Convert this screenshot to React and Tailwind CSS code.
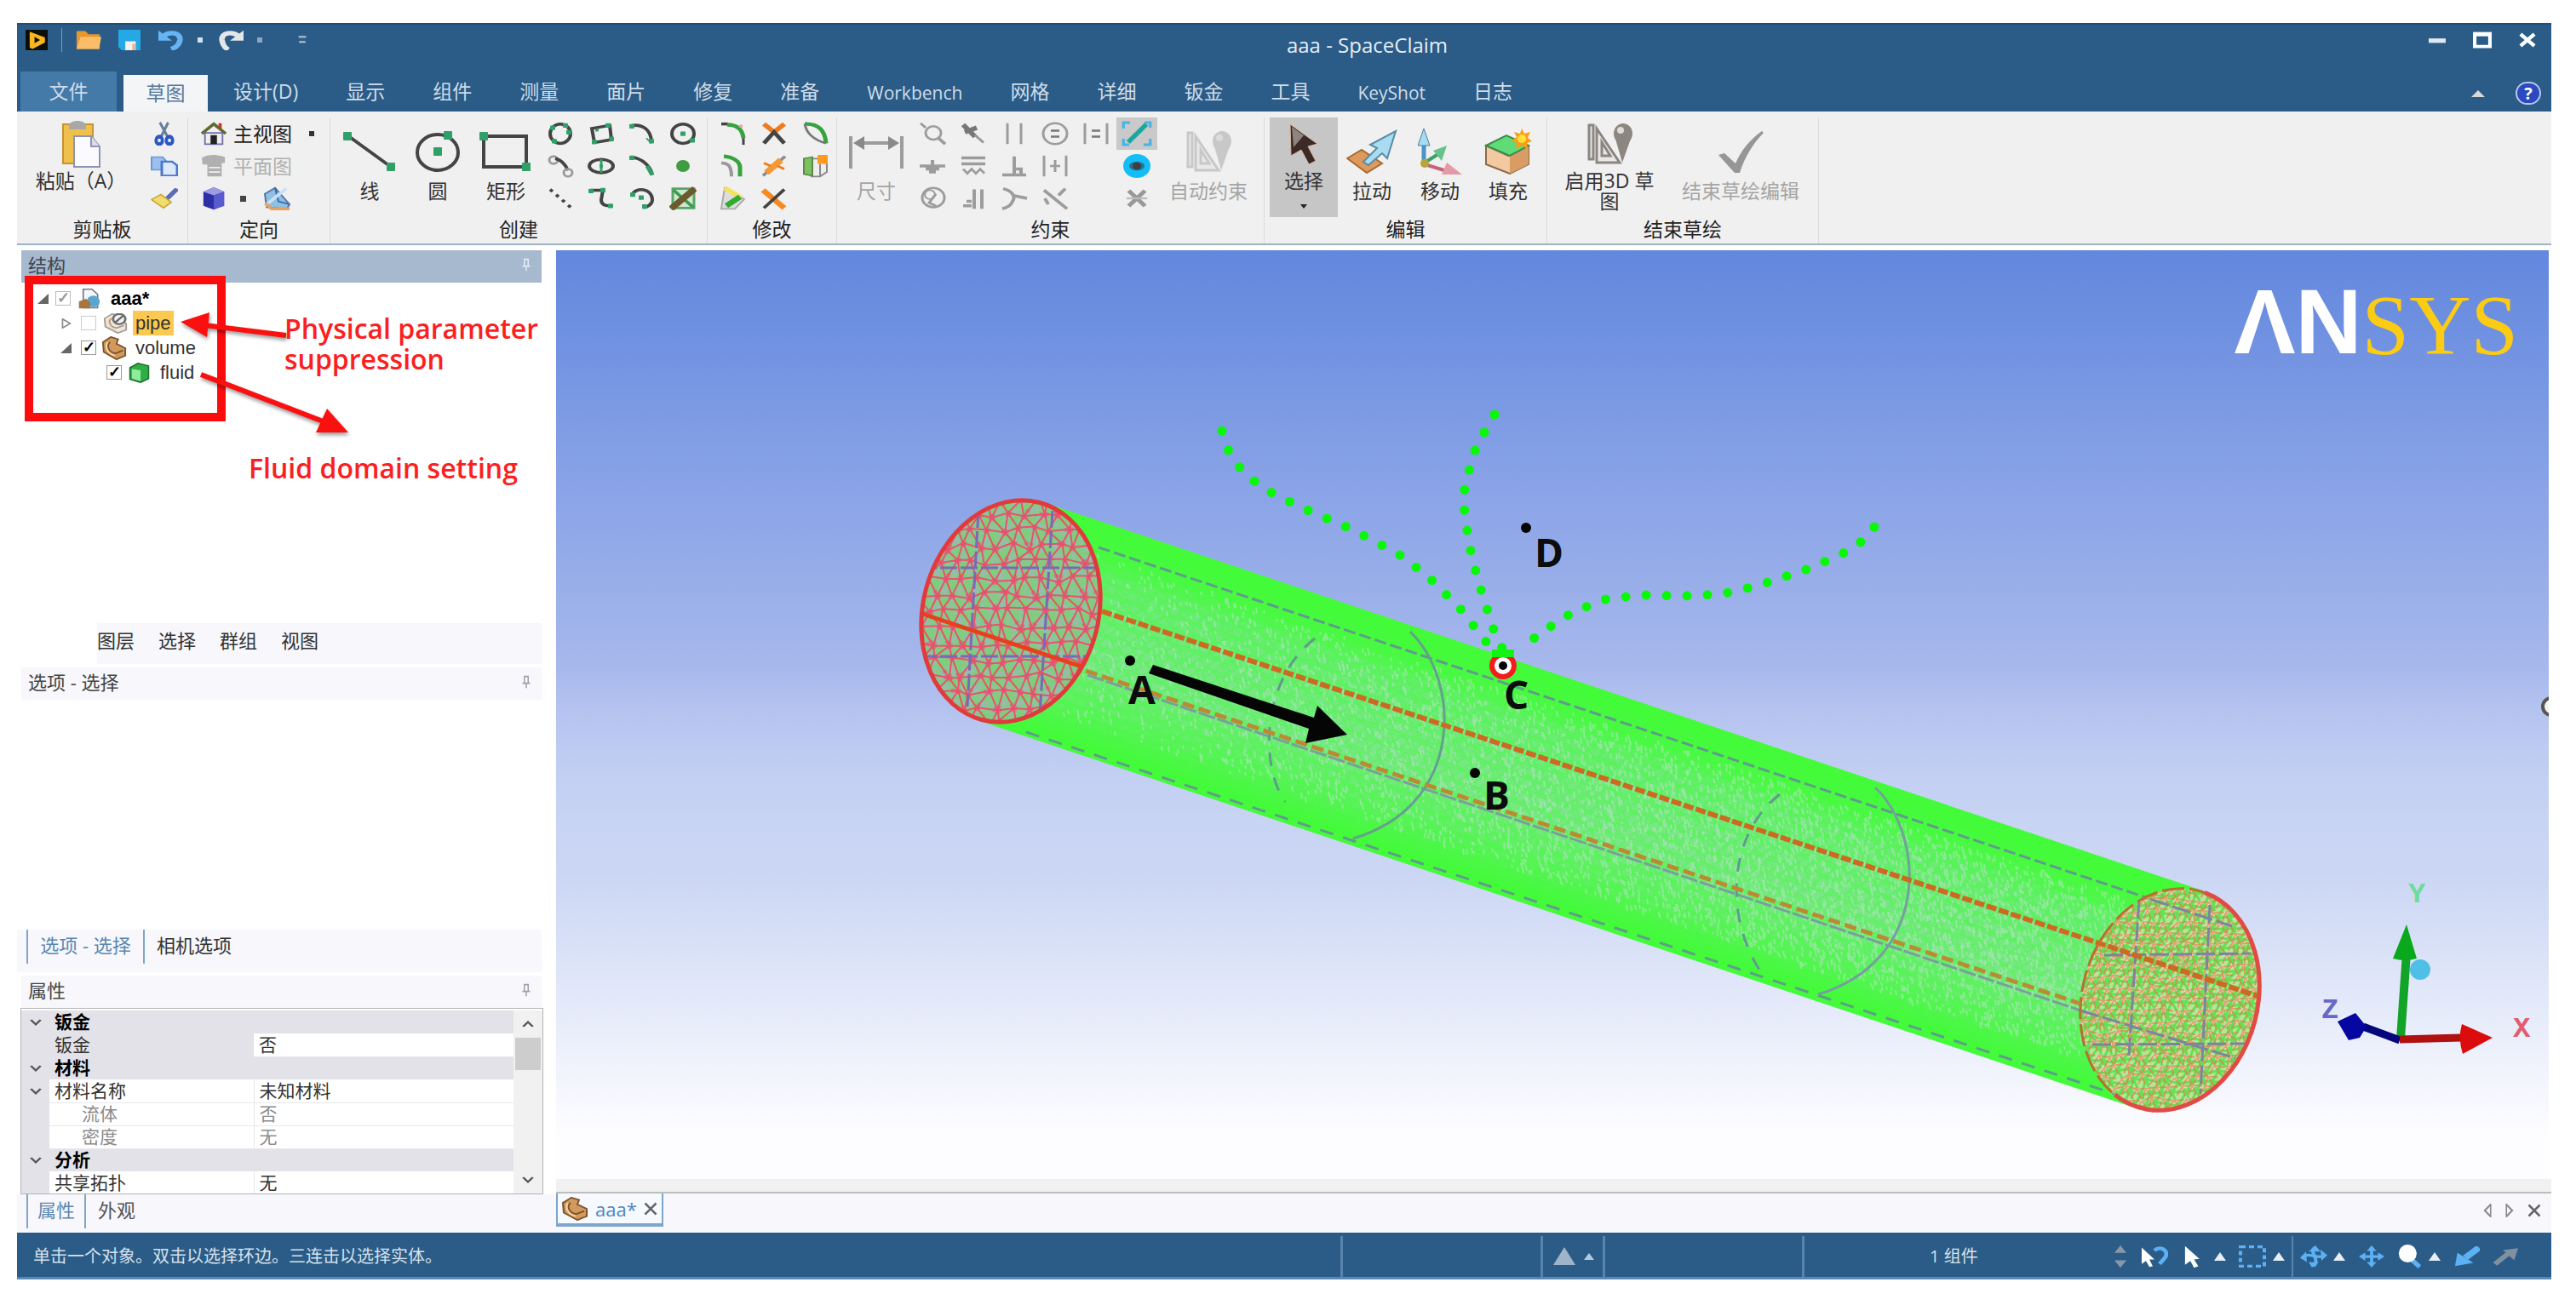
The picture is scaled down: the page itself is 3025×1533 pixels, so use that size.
import React from 'react';

/* ---------- small helpers ---------- */

const Svg = ({ children, box = '0 0 32 32', className = 'w-8 h-7' }) => (
  <svg viewBox={box} className={className} fill="none" preserveAspectRatio="none" aria-hidden="true">
    {children}
  </svg>
);

const G = '#2fa067';
const D = '#444444';
const M = '#9c9c9c';

const Dot = ({ x, y, c = G, r = 3 }) => <rect x={x - r} y={y - r} width={r * 2} height={r * 2} rx="1" fill={c} />;

const createIcons = [
  <><ellipse cx="16" cy="16" rx="12" ry="13" stroke={D} strokeWidth="4" /><Dot x={7} y={8} /><Dot x={26} y={14} /><Dot x={9} y={26} /><Dot x={22} y={5} /></>,
  <><path d="M5 9 L26 5 L28 24 L8 28 Z" stroke={D} strokeWidth="4" /><Dot x={24} y={5} /><Dot x={8} y={27} /><Dot x={28} y={23} /><Dot x={11} y={11} r={2} /></>,
  <><path d="M4 5 C18 3 26 12 27 26" stroke={D} strokeWidth="4" /><Dot x={4} y={6} /><Dot x={27} y={26} /><path d="M21 22 L27 29" stroke={G} strokeWidth="2" /></>,
  <><circle cx="16" cy="16" r="13" stroke={D} strokeWidth="4" /><Dot x={16} y={16} /><Dot x={27} y={25} /></>,
  <><circle cx="8" cy="8" r="5" stroke={M} strokeWidth="3" /><path d="M10 6 C18 8 22 14 25 22" stroke={D} strokeWidth="4" /><circle cx="25" cy="25" r="5" stroke={M} strokeWidth="3" /></>,
  <><ellipse cx="16" cy="16" rx="14" ry="9" stroke={D} strokeWidth="4" /><path d="M16 7 V25" stroke={G} strokeWidth="3" /><Dot x={16} y={16} r={2} /></>,
  <><path d="M4 4 C16 6 26 16 28 28" stroke={D} strokeWidth="4" /><path d="M22 16 L28 28" stroke={G} strokeWidth="5" /><Dot x={4} y={5} /></>,
  <ellipse cx="16" cy="16" rx="8" ry="8" fill="#3f9c42" />,
  <path d="M4 4 L28 28" stroke={D} strokeWidth="4" strokeDasharray="4 6" />,
  <><path d="M4 5 H18 L16 18 Q16 26 26 26" stroke={D} strokeWidth="4" /><Dot x={4} y={6} /><Dot x={18} y={5} /><Dot x={27} y={26} /></>,
  <><path d="M4 12 C8 0 28 2 28 18 C28 24 22 28 18 28" stroke={D} strokeWidth="4" /><Dot x={5} y={11} /><Dot x={15} y={15} /><Dot x={19} y={27} /></>,
  <><path d="M4 3 H29 V29 H4 Z" stroke="#5aa468" strokeWidth="3" fill="#cfe6cf" /><path d="M5 5 L28 28" stroke="#3b9c50" strokeWidth="4" /><path d="M2 30 L30 3" stroke="#6b5a2c" strokeWidth="8" /></>,
];

const modifyIcons = [
  <><path d="M2 3 H10" stroke={D} strokeWidth="4" /><path d="M9 4 C20 4 27 10 28 22" stroke="#36a33c" strokeWidth="5" /><path d="M28 22 V31" stroke={D} strokeWidth="3" /><Dot x={25} y={6} c="#f0a0a0" r={2} /></>,
  <><path d="M4 3 L16 14 L28 3" stroke="#f07a1c" strokeWidth="6" /><path d="M4 29 L16 14 L28 29" stroke={D} strokeWidth="5" /></>,
  <><path d="M4 3 C20 2 28 12 29 29" stroke="#36a33c" strokeWidth="5" /><path d="M4 3 C6 16 14 24 29 29" stroke="#777" strokeWidth="3" /></>,
  <><path d="M5 3 C16 4 24 10 24 18 V30" stroke="#36a33c" strokeWidth="5" /><path d="M2 12 C10 12 14 16 14 30" stroke="#999" strokeWidth="4" /></>,
  <><path d="M3 29 L29 3" stroke="#8a8a9c" strokeWidth="4" /><path d="M7 25 L24 8" stroke="#f59a32" strokeWidth="8" /><path d="M4 12 L12 16 M20 16 L28 20" stroke="#f07a1c" strokeWidth="3" /></>,
  <><path d="M12 6 H26 L30 11 V24 L22 30 H12 Z" fill="#eee" stroke="#888" strokeWidth="2" /><path d="M22 13 V30" stroke="#888" strokeWidth="2" /><path d="M3 6 L13 4 V29 L3 27 Z" fill="#7cc25c" stroke="#5d8a4c" strokeWidth="2" /><Dot x={25} y={7} c="#ff9a1c" r={6} /></>,
  <><path d="M6 2 L29 17 L18 30 H2 Z" fill="#ddd" stroke="#aaa" strokeWidth="2" /><path d="M6 2 L25 15" stroke="#f3e25c" strokeWidth="6" /><path d="M8 26 L24 14" stroke="#33aa33" strokeWidth="7" /></>,
  <><path d="M3 5 L28 29" stroke="#f58a22" strokeWidth="7" /><path d="M4 29 L28 4" stroke={D} strokeWidth="4" /></>,
  null,
];

const constraintIcons = [
  <><path d="M2 2 L8 8" stroke={M} strokeWidth="3" /><circle cx="17" cy="15" r="9" stroke={M} strokeWidth="3" /><path d="M23 22 L31 30" stroke={M} strokeWidth="4" /></>,
  <><path d="M4 4 L18 20 M6 14 L20 8" stroke="#777" strokeWidth="6" /><path d="M18 18 L28 28" stroke="#999" strokeWidth="3" /></>,
  <path d="M8 2 V30 M24 2 V30" stroke={M} strokeWidth="3" />,
  <><circle cx="16" cy="16" r="14" stroke={M} strokeWidth="3" /><path d="M11 12 H21 M11 20 H21" stroke="#777" strokeWidth="3" /></>,
  <><path d="M3 2 V30 M29 2 V30" stroke={M} strokeWidth="3" /><path d="M11 12 H21 M11 20 H21" stroke="#777" strokeWidth="3" /></>,
  'sketch',
  <path d="M1 16 H31 M8 20 H24 M12 24 H20 M16 8 V16" stroke={M} strokeWidth="4" />,
  <><path d="M2 5 H30 M2 13 H30" stroke={M} strokeWidth="4" /><path d="M4 20 L9 26 L14 20 L19 26 L24 20 L29 26" stroke={M} strokeWidth="3" /></>,
  <path d="M16 3 V26 M2 28 H30 M18 20 H24 V27" stroke={M} strokeWidth="4" />,
  <path d="M3 2 V30 M29 2 V30 M16 8 V24 M10 16 H22" stroke={M} strokeWidth="3" />,
  null,
  'eye',
  <><circle cx="17" cy="15" r="13" stroke={M} strokeWidth="3" /><circle cx="13" cy="11" r="6" stroke={M} strokeWidth="2" /><path d="M20 10 L12 22 L20 26" stroke={M} strokeWidth="3" /></>,
  <path d="M4 26 H14 M8 20 H14 M17 4 V30 M26 4 V30" stroke={M} strokeWidth="4" />,
  <path d="M3 3 C14 6 18 14 14 20 C12 26 8 28 2 30 M14 12 L31 16" stroke={M} strokeWidth="4" />,
  <path d="M3 5 L30 30 M28 3 L20 12 M4 16 L8 24" stroke={M} strokeWidth="4" />,
  null,
  'cross',
];

const BigButton = ({ icon, label, width = 'w-20', high, dim, children }) => (
  <button className={`${width} flex flex-col items-center h-[117px] whitespace-nowrap ${dim ? 'text-[#a5a5a5]' : 'text-[#333]'}`}>
    <span className={`flex items-center justify-center ${high ? 'h-[62px]' : 'h-[72px] pt-2'}`}>{icon}</span>
    <span className={high ? 'leading-6' : 'leading-7'}>{label}</span>
    {children}
  </button>
);

const IconGrid = ({ icons, cols, names }) => (
  <div className={`grid ${cols} grid-rows-3 auto-cols-[48px] h-[114px]`}>
    {icons.map((ic, i) => {
      if (!ic) return <span key={i} />;
      if (ic === 'sketch')
        return (
          <button key={i} aria-label="草图约束" className="flex items-center justify-center bg-[#c9c9c9]">
            <Svg className="w-9 h-8"><path d="M2 10 V3 H9 M23 29 H30 V22 M2 22 V29 H8 M24 3 H30 V9" stroke="#4ab4e8" strokeWidth="3" /><path d="M7 26 L26 5" stroke="#1aa7a0" strokeWidth="5" /></Svg>
          </button>
        );
      if (ic === 'eye')
        return (
          <button key={i} aria-label="显示约束" className="flex items-center justify-center">
            <Svg><circle cx="16" cy="16" r="16" fill="#12bdf8" /><ellipse cx="16" cy="16" rx="9" ry="6" fill="#2c6f8c" /><circle cx="16" cy="16" r="5" fill="#3a4044" /></Svg>
          </button>
        );
      if (ic === 'cross')
        return (
          <button key={i} aria-label="删除约束" className="flex items-center justify-center">
            <Svg className="w-7 h-6"><path d="M5 4 L27 28 M27 4 L5 28" stroke="#999" strokeWidth="6" /><path d="M2 16 H30" stroke="#bbb" strokeWidth="3" /></Svg>
          </button>
        );
      return (
        <button key={i} aria-label={`${names} ${i + 1}`} className="flex items-center justify-center">
          <Svg>{ic}</Svg>
        </button>
      );
    })}
  </div>
);

const Group = ({ label, width, children }) => (
  <section className={`${width} shrink-0 flex flex-col border-r border-[#dcdcdc]`}>
    <div className="flex h-[117px]">{children}</div>
    <div className="text-center leading-7 text-[#222]">{label}</div>
  </section>
);

const Compass = ({ color }) => (
  <Svg className="w-14 h-12" box="0 0 56 48">
    <path d="M4 2 L9 2 L9 42 L4 42 Z M13 6 L40 46 H13 Z M19 22 L29 38 H19 Z" stroke={color} strokeWidth="3" fill="#e8e8e8" />
    <ellipse cx="44" cy="12" rx="11" ry="12" fill={color} />
    <path d="M35 18 L53 18 L43 46 Z" fill={color} />
    <ellipse cx="41" cy="8" rx="4" ry="4" fill="#dcdcdc" />
  </Svg>
);

const PartIcon = ({ className = 'w-8 h-7', fill = '#d09a5e', stroke = '#7e5128', hidden }) => (
  <Svg className={className}>
    <path d="M2 8 L12 1 L21 4 L19 10 L30 16 V26 L19 31 L3 21 Z" fill={fill} stroke={stroke} strokeWidth="2" />
    <path d="M11 8 C6 12 9 22 18 23 L27 19" stroke={stroke} strokeWidth="2" />
    <path d="M8 8 C4 14 8 24 17 26" stroke="#f6d9ae" strokeWidth="2" />
    {hidden && <><circle cx="21" cy="9" r="8" fill="#f2f2f2" stroke="#6c6c6c" strokeWidth="3" /><path d="M15 15 L27 3" stroke="#6c6c6c" strokeWidth="3" /></>}
  </Svg>
);

const Pin = ({ color = '#999' }) => (
  <Svg className="w-3 h-4" box="0 0 16 20"><path d="M5 2 H11 V12 H5 Z M2 12 H14 M8 12 V19" stroke={color} strokeWidth="2" /></Svg>
);

/* ---------- title bar and tabs ---------- */

const tabs = ['设计(D)', '显示', '组件', '测量', '面片', '修复', '准备', 'Workbench', '网格', '详细', '钣金', '工具', 'KeyShot', '日志'];

const TitleBar = () => (
  <header className="bg-[#2b5c87] text-white border-t-2 border-[#1f4c78]">
    <div className="relative flex items-start justify-between h-[55px] pt-1 pl-[10px] pr-[18px]">
      <div className="flex items-center h-7">
        <Svg className="w-[26px] h-6"><rect width="32" height="32" fill="#0d0d0d" /><path d="M6 3 L28 12 V20 L10 30 L6 28 Z" fill="#f9b71c" /><path d="M13 11 L21 16 L13 21 Z" fill="#111" /></Svg>
        <span className="w-px h-7 bg-[#7f9fbd] mx-4" />
        <button aria-label="打开"><Svg className="w-[30px] h-6"><path d="M1 2 H12 L16 7 H30 V30 H1 Z" fill="#e8962e" /><path d="M6 11 H32 L29 30 H1 Z" fill="#fbbd68" /></Svg></button>
        <button aria-label="保存" className="ml-5"><Svg className="w-[26px] h-6"><path d="M0 0 H32 V32 H5 L0 27 Z" fill="#25a9e6" /><path d="M10 18 H25 V32 H10 Z" fill="#f4f1ef" /><path d="M20 22 H25 V32 H20 Z" fill="#e4b89a" /></Svg></button>
        <button aria-label="撤消" className="ml-[21px]"><Svg className="w-[30px] h-6"><path d="M6 10 C14 2 28 4 27 16 C26 24 22 28 16 30" stroke="#67b4f4" strokeWidth="7" /><path d="M0 1 V17 H17 Z" fill="#67b4f4" /></Svg></button>
        <span className="w-[6px] h-[6px] bg-[#d5e3f0] ml-4 mr-[18px]" />
        <button aria-label="恢复"><Svg className="w-[30px] h-6"><path d="M26 10 C18 2 4 4 5 16 C6 24 8 28 13 31" stroke="#e4e7ea" strokeWidth="7" /><path d="M32 1 V17 H15 Z" fill="#e4e7ea" /></Svg></button>
        <span className="w-[6px] h-[6px] bg-[#8fa6bc] ml-4 mr-[42px]" />
        <Svg className="w-[10px] h-3"><path d="M2 6 H30 M4 22 H28" stroke="#9fb2c6" strokeWidth="7" /></Svg>
      </div>
      <h1 className="absolute inset-x-0 top-[6px] text-center text-[24px] leading-9 text-[#e6edf4] pl-[195px]">aaa - SpaceClaim</h1>
      <div className="flex items-center h-8 gap-8 z-10 -mt-[2px]">
        <button aria-label="最小化"><Svg className="w-5 h-6"><path d="M0 17 H32" stroke="#e0e8f0" strokeWidth="7" /></Svg></button>
        <button aria-label="最大化"><Svg className="w-[22px] h-5"><path d="M3 5 H29 V28 H3 Z" stroke="#fff" strokeWidth="6" /><path d="M0 5 H32" stroke="#fff" strokeWidth="8" /></Svg></button>
        <button aria-label="关闭"><Svg className="w-5 h-5"><path d="M3 5 L29 27 M29 5 L3 27" stroke="#fff" strokeWidth="7" /></Svg></button>
      </div>
    </div>
    <nav className="flex items-stretch h-[47px] text-[23px] leading-none text-[#cfdce8] pl-1 whitespace-nowrap">
      <button className="bg-[#437aa8] w-[113px]">文件</button>
      <button className="bg-[#f4f5f7] text-[#54789c] w-[99px] ml-2 mt-1 mr-[2px]">草图</button>
      {tabs.map((t) => (
        <button key={t} className={`px-7 ${/^[A-Z]/.test(t) ? 'text-[21px] pt-1' : ''}`}>{t}</button>
      ))}
      <div className="ml-auto flex items-center gap-9 pr-3 pt-1">
        <button aria-label="折叠功能区"><Svg className="w-4 h-2"><path d="M16 0 L32 32 H0 Z" fill="#d8d8d8" /></Svg></button>
        <button aria-label="帮助" className="w-[30px] h-[27px] rounded-full bg-[#2b49c0] border-2 border-[#b9c6ee] text-[20px] leading-5 font-bold text-white">?</button>
      </div>
    </nav>
  </header>
);

/* ---------- ribbon ---------- */

const Ribbon = () => (
  <div className="flex h-[157px] bg-[#f0f0f0] border-b-2 border-[#9fb3c4] pt-[7px] text-[23px] overflow-hidden">
    <Group label="剪贴板" width="w-[201px]">
      <BigButton
        high
        width="w-[150px]"
        label="粘贴（A）"
        icon={
          <Svg className="w-12 h-[58px]" box="0 0 48 58">
            <path d="M3 6 H38 V52 H3 Z" fill="#f0c04c" stroke="#c79232" strokeWidth="2" />
            <path d="M10 8 C10 0 30 0 30 8 V12 H10 Z" fill="#a8a8a8" />
            <path d="M16 20 H36 L46 32 V56 H16 Z" fill="#fbfbff" stroke="#8f94b4" strokeWidth="2" />
            <path d="M36 20 V32 H46" stroke="#8f94b4" strokeWidth="2" fill="#d8dcee" />
          </Svg>
        }
      />
      <div className="grid grid-rows-3 h-[114px] w-[46px]">
        <button aria-label="剪切" className="flex items-center justify-center"><Svg className="w-6 h-7"><path d="M9 1 L21 20 M22 1 L11 20" stroke="#67809c" strokeWidth="4" /><circle cx="8" cy="25" r="5" stroke="#2c58c4" strokeWidth="5" /><circle cx="24" cy="25" r="5" stroke="#2c58c4" strokeWidth="5" /></Svg></button>
        <button aria-label="复制" className="flex items-center justify-center"><Svg className="w-8 h-6"><path d="M1 2 H14 L18 8 V22 H1 Z" fill="#9dbff0" stroke="#6f96d8" strokeWidth="2" /><path d="M13 9 H25 L31 15 V31 H13 Z" fill="#dbe8fb" stroke="#4a78cc" strokeWidth="3" /></Svg></button>
        <button aria-label="格式刷" className="flex items-center justify-center"><Svg className="w-8 h-6"><path d="M31 1 L18 18" stroke="#5b6bb4" strokeWidth="6" /><path d="M1 18 L12 10 L24 22 L15 31 Z" fill="#f2dc70" stroke="#c7a636" strokeWidth="2" /></Svg></button>
      </div>
    </Group>

    <Group label="定向" width="w-[167px]">
      <div className="grid grid-rows-3 h-[114px] pl-[15px] whitespace-nowrap">
        <button className="flex items-center text-[#222]">
          <Svg className="w-[30px] h-7 mr-2"><path d="M5 15 H27 V30 H5 Z" fill="#eee" stroke="#6f6fb0" strokeWidth="2" /><path d="M1 16 L16 3 L31 16" stroke="#5f6c30" strokeWidth="4" /><path d="M24 2 V9" stroke="#c03a2c" strokeWidth="4" /><path d="M12 18 H20 V30 H12 Z" fill="#222" /></Svg>
          主视图
          <span className="w-[6px] h-[6px] bg-[#333] ml-5" />
        </button>
        <button className="flex items-center text-[#b0b0b0]">
          <Svg className="w-[30px] h-7 mr-2"><path d="M1 5 C8 0 20 0 30 4 V12 H26 V30 H8 V14 H2 Z" fill="#b0b0b0" /><path d="M10 18 H24 M10 24 H24" stroke="#eee" strokeWidth="2" /></Svg>
          平面图
        </button>
        <div className="flex items-center">
          <button aria-label="旋转视图"><Svg className="w-[30px] h-7"><path d="M3 7 L16 1 L29 7 V26 L16 31 L3 26 Z" fill="#2e2ea6" /><path d="M3 7 L16 1 L29 7 L16 12 Z" fill="#9c9ce0" /><path d="M16 12 L29 7 V26 L16 31 Z" fill="#5a5ad0" /></Svg></button>
          <span className="w-[7px] h-[7px] bg-[#444] ml-4 mr-5" />
          <button aria-label="贴合视图"><Svg><path d="M2 10 L14 2 L31 24 L28 30 L4 28 Z" fill="#8fc0e4" stroke="#5577a4" strokeWidth="2" /><path d="M14 2 L18 20 L31 24" stroke="#3f68a0" strokeWidth="2" /><path d="M2 26 L27 3" stroke="#c7e2f4" strokeWidth="4" /><path d="M3 23 L10 30 H31" stroke="#e8a05c" strokeWidth="4" /></Svg></button>
        </div>
      </div>
    </Group>

    <Group label="创建" width="w-[443px]">
      <div className="flex pl-[6px]">
        <BigButton label="线" icon={<Svg className="w-16 h-12" box="0 0 64 48"><path d="M6 5 L57 42" stroke={D} strokeWidth="4" /><Dot x={6} y={6} r={5} /><Dot x={57} y={42} r={5} /></Svg>} />
        <BigButton label="圆" icon={<Svg className="w-14 h-12" box="0 0 56 48"><ellipse cx="28" cy="25" rx="24" ry="21" stroke={D} strokeWidth="4" /><Dot x={28} y={24} r={5} /><Dot x={40} y={5} r={5} /></Svg>} />
        <BigButton label="矩形" icon={<Svg className="w-16 h-12" box="0 0 64 48"><path d="M6 6 H56 V42 H6 Z" stroke={D} strokeWidth="4" /><Dot x={6} y={6} r={5} /><Dot x={56} y={42} r={5} /></Svg>} />
        <IconGrid icons={createIcons} cols="grid-cols-[repeat(4,48px)]" names="创建" />
      </div>
    </Group>

    <Group label="修改" width="w-[152px]">
      <div className="pl-[6px]">
        <IconGrid icons={modifyIcons} cols="grid-cols-[repeat(3,48px)]" names="修改" />
      </div>
    </Group>

    <Group label="约束" width="w-[502px]">
      <div className="flex pl-1">
        <BigButton dim width="w-[84px]" label="尺寸" icon={<Svg className="w-16 h-10" box="0 0 64 40"><path d="M2 2 V40 M62 2 V40 M8 10 H56" stroke={M} strokeWidth="4" /><path d="M5 10 L18 2 V18 Z M59 10 L46 2 V18 Z" fill="#8a8a8a" /></Svg>} />
        <IconGrid icons={constraintIcons} cols="grid-cols-[repeat(6,48px)]" names="约束" />
        <BigButton dim width="w-[120px]" label="自动约束" icon={<Compass color="#c8c8c8" />} />
      </div>
    </Group>

    <Group label="编辑" width="w-[332px]">
      <div className="flex pl-[6px]">
        <div className="bg-[#c6c6c6]">
          <BigButton high label="选择" icon={<Svg className="w-9 h-12" box="0 0 36 48"><path d="M2 1 L34 24 L23 27 L32 44 L24 48 L15 31 L3 38 Z" fill="#3c2a26" stroke="#d9b8a4" strokeWidth="1" /><path d="M4 4 L18 14 L6 28 Z" fill="#8f8480" /></Svg>}>
            <span className="border-x-4 border-t-[5px] border-x-transparent border-t-[#222] mt-4" />
          </BigButton>
        </div>
        <BigButton label="拉动" icon={<Svg className="w-[60px] h-[52px]" box="0 0 60 52"><path d="M1 34 L18 24 L42 40 L24 51 Z" fill="#dd9a5c" stroke="#a86a34" strokeWidth="2" /><path d="M20 38 L36 22 L28 18 L58 2 L48 34 L42 28 L26 42 Z" fill="#a9dcf0" stroke="#5a8ca8" strokeWidth="2" /></Svg>} />
        <BigButton label="移动" icon={<Svg className="w-[52px] h-[54px]" box="0 0 52 54"><path d="M7 18 V40" stroke="#4a94c4" strokeWidth="5" /><path d="M7 0 L14 20 H0 Z" fill="#a9dcf0" stroke="#4a7ca8" /><path d="M8 40 L24 30" stroke="#3ca060" strokeWidth="4" /><path d="M34 20 L18 26 L28 38 Z" fill="#66c48a" /><path d="M8 42 L34 50" stroke="#c46478" strokeWidth="4" /><path d="M52 54 L28 54 L34 40 Z" fill="#e39aa6" /><circle cx="8" cy="41" r="5" fill="#b8a43c" /></Svg>} />
        <BigButton label="填充" icon={<Svg className="w-[56px] h-[54px]" box="0 0 56 54"><path d="M2 20 L28 32 L52 20 V42 L30 53 L2 42 Z" fill="#f2c9a0" stroke="#8c6a48" strokeWidth="2" /><path d="M30 32 L52 20 V42 L30 53 Z" fill="#d99c64" /><path d="M2 20 L26 8 L52 20 L30 32 Z" fill="#5fdc78" stroke="#3c8c4c" strokeWidth="2" /><path d="M44 0 L47 6 L54 4 L51 11 L56 15 L50 17 L51 24 L44 20 L37 24 L38 17 L32 14 L38 10 L35 4 L42 6 Z" fill="#ff9c14" /><circle cx="44" cy="12" r="5" fill="#ffe23c" /></Svg>} />
      </div>
    </Group>

    <Group label="结束草绘" width="w-[319px]">
      <BigButton high width="w-[146px]" label={<>启用3D 草<br />图</>} icon={<Compass color="#8c8680" />} />
      <BigButton dim width="w-[162px]" label="结束草绘编辑" icon={<Svg className="w-[58px] h-[52px]" box="0 0 58 52"><path d="M3 30 L10 28 L23 40 C30 24 40 12 54 2 L56 4 C44 16 34 32 28 51 H22 Z" fill="#969696" /></Svg>} />
    </Group>
  </div>
);

/* ---------- left side ---------- */

const PanelHeader = ({ children, active }) => (
  <div className={`flex items-center justify-between h-[38px] pl-2 pr-3 pb-1 ml-[5px] mr-[17px] ${active ? 'bg-[#a7b9ce] text-[#3c4652]' : 'bg-[#f7f7fc] text-[#444]'}`}>
    <h2>{children}</h2>
    <Pin color={active ? '#e4ecf4' : '#a0a0a8'} />
  </div>
);

const Check = ({ id, checked, gray }) => (
  <input
    id={id}
    type="checkbox"
    defaultChecked={checked}
    className={`appearance-none w-[18px] h-[17px] border shrink-0 checked:before:content-['✓'] before:block before:text-[18px] before:leading-[15px] before:text-center before:font-bold ${gray ? 'border-[#bbb] text-[#999]' : checked ? 'border-[#999] text-black' : 'border-[#ccc]'}`}
  />
);

const Arrow = ({ open }) => (
  <Svg className="w-[13px] h-3">{open ? <path d="M32 0 V32 H0 Z" fill="#666" /> : <path d="M6 2 L28 16 L6 30 Z" stroke="#888" strokeWidth="4" />}</Svg>
);

const StructureTree = () => (
  <div className="relative flex-1 text-[22px] leading-[29px] text-[#333]">
    <div className="pt-1 font-[Liberation_Sans]">
      <div className="flex items-center h-[29px] pl-6 gap-2">
        <Arrow open />
        <Check id="node-aaa" checked gray />
        <Svg className="w-[27px] h-6"><path d="M8 1 H20 L28 9 V30 H8 Z" fill="#f4f8fb" stroke="#778" strokeWidth="2" /><circle cx="22" cy="20" r="9" fill="#59a6d0" /><path d="M2 20 L12 16 L18 22 V31 H2 Z" fill="#a8763c" /></Svg>
        <label htmlFor="node-aaa" className="font-bold text-black ml-1">aaa*</label>
      </div>
      <div className="flex items-center h-[29px] pl-[51px]">
        <Arrow />
        <span className="w-[11px]" />
        <Check id="node-pipe" />
        <span className="w-2" />
        <PartIcon className="w-[29px] h-6" fill="#efe6dc" stroke="#a09890" hidden />
        <label htmlFor="node-pipe" className="bg-[#fdc84f] px-[3px] ml-[6px]">pipe</label>
      </div>
      <div className="flex items-center h-[29px] pl-[51px]">
        <Arrow open />
        <span className="w-[11px]" />
        <Check id="node-volume" checked />
        <span className="w-[6px]" />
        <PartIcon className="w-[30px] h-7" />
        <label htmlFor="node-volume" className="ml-[10px]">volume</label>
      </div>
      <div className="flex items-center h-[29px] pl-[105px]">
        <Check id="node-fluid" checked />
        <span className="w-2" />
        <Svg className="w-[25px] h-6"><path d="M2 8 L14 1 L30 5 V25 L18 31 L2 26 Z" fill="#2fae48" stroke="#1d6e2c" strokeWidth="2" /><path d="M5 10 L18 12 V29 L5 25 Z" fill="#8fec9c" /></Svg>
        <label htmlFor="node-fluid" className="ml-3">fluid</label>
      </div>
    </div>

    {/* callouts */}
    <div className="absolute left-[9px] -top-2 w-[236px] h-[171px] border-10 border-[#fb0d0d]" />
    <svg className="absolute left-0 top-0 w-[633px] h-[200px]" viewBox="20 332 633 200" aria-hidden="true">
      <g fill="#fb1010" stroke="#fb1010" style={{ filter: 'drop-shadow(1px 3px 2px rgba(0,0,0,.4))' }}>
        <path d="M336 394 L240 382" strokeWidth="6" />
        <path d="M212 378 L246 367 L243 396 Z" stroke="none" />
        <path d="M236 440 L382 496" strokeWidth="6" />
        <path d="M409 508 L371 508 L384 480 Z" stroke="none" />
      </g>
    </svg>
    <p className="absolute left-[314px] top-[36px] text-[32px] leading-9 font-semibold text-[#fb2020] whitespace-nowrap">
      Physical parameter<br />suppression
    </p>
    <p className="absolute left-[272px] top-[200px] text-[32px] leading-9 font-semibold text-[#fb2020] whitespace-nowrap">
      Fluid domain setting
    </p>
  </div>
);

const properties = [
  { name: '钣金', head: true },
  { name: '钣金', value: '否', shade: true },
  { name: '材料', head: true },
  { name: '材料名称', value: '未知材料', toggle: true },
  { name: '流体', value: '否', sub: true },
  { name: '密度', value: '无', sub: true },
  { name: '分析', head: true },
  { name: '共享拓扑', value: '无' },
];

const Chevron = ({ up }) => (
  <Svg className="w-[14px] h-2 mx-auto"><path d={up ? 'M3 28 L16 6 L29 28' : 'M3 4 L16 26 L29 4'} stroke="#555" strokeWidth="6" /></Svg>
);

const PropertyTable = () => (
  <div className="flex h-[219px] ml-1 mr-[15px] pt-[2px] border border-[#b4b4b8] overflow-hidden">
    <table className="flex-1 self-start table-fixed border-collapse text-[21px] leading-none text-[#333]">
      <colgroup><col className="w-[33px]" /><col className="w-[240px]" /><col /></colgroup>
      <tbody>
        {properties.map((p, i) => (
          <tr key={i} className="h-[27px]">
            <td className="p-0 bg-[#e2e2e8]">{(p.head || p.toggle) && <Chevron />}</td>
            <td className={`p-0 h-[27px] ${p.head ? 'bg-[#e2e2e8] font-bold text-black' : p.shade ? 'bg-[#e2e2e8]' : 'border-b border-r border-[#e8e8ec]'} ${p.sub ? 'pl-[38px] text-[#8c8c8c]' : 'pl-[6px]'}`}>{p.name}</td>
            <td className={`p-0 pl-[6px] ${p.head ? 'bg-[#e2e2e8]' : 'border-b border-[#e8e8ec]'} ${p.sub ? 'text-[#8c8c8c]' : ''}`}>{p.value}</td>
          </tr>
        ))}
      </tbody>
    </table>
    <div className="w-[34px] bg-[#f1f1f1] flex flex-col items-center py-3">
      <Chevron up />
      <div className="w-[30px] h-[38px] bg-[#cdcdcd] mt-3" />
      <div className="mt-auto"><Chevron /></div>
    </div>
  </div>
);

const Sidebar = () => (
  <aside className="w-[633px] shrink-0 flex flex-col pt-[6px] text-[22px] whitespace-nowrap">
    <PanelHeader active>结构</PanelHeader>
    <StructureTree />
    <div className="flex items-center gap-7 h-12 pb-2 ml-[94px] mr-[17px] bg-[#f7f7fc] text-[#333]">
      {['图层', '选择', '群组', '视图'].map((t) => <button key={t}>{t}</button>)}
    </div>
    <div className="pt-1"><PanelHeader>选项 - 选择</PanelHeader></div>
    <div className="h-[270px]" />
    <div className="flex items-start h-[50px] pl-[11px] mr-[17px] bg-[#f7f7fc]">
      <button className="h-10 w-[139px] pb-1 border-x-2 border-[#7fa5c8] text-[#5a87b0]">选项 - 选择</button>
      <button className="h-10 px-[14px] pb-1 text-[#333]">相机选项</button>
    </div>
    <div className="pt-1"><PanelHeader>属性</PanelHeader></div>
    <PropertyTable />
    <div className="flex items-start h-[45px] pl-[11px] bg-[#f7f7fc]">
      <button className="h-10 w-[70px] pb-1 border-x-2 border-[#7fa5c8] text-[#5a87b0]">属性</button>
      <button className="h-10 px-[14px] pb-1 text-[#555]">外观</button>
    </div>
  </aside>
);

/* ---------- 3D view ---------- */

const START = [1187, 718];
const AXIS = [1361, 456];
const RX = 103;
const RY = 132;
const TILT = (15 * Math.PI) / 180;

const rim = (u, a) => {
  const ex = RX * Math.cos(a);
  const ey = RY * Math.sin(a);
  return [
    START[0] + AXIS[0] * u + ex * Math.cos(TILT) - ey * Math.sin(TILT),
    START[1] + AXIS[1] * u + ex * Math.sin(TILT) + ey * Math.cos(TILT),
  ];
};

const fmt = ([x, y]) => `${x.toFixed(1)} ${y.toFixed(1)}`;

// deterministic noise so that the mesh is the same on every render
const noise = (i, j) => {
  const s = Math.sin(i * 127.1 + j * 311.7) * 43758.5453;
  return s - Math.floor(s) - 0.5;
};

const surfaceMesh = () => {
  const rings = 110;
  const sides = 52;
  let d = '';
  for (let k = 0; k < sides; k++) {
    const a = (k / sides) * Math.PI * 2;
    const b = ((k + 1) / sides) * Math.PI * 2;
    d += `M${fmt(rim(0, a))}L${fmt(rim(1, a))}`;
    d += `M${fmt(rim(0, a))}`;
    for (let i = 1; i <= rings; i++) d += `L${fmt(rim(i / rings, i % 2 ? b : a))}`;
  }
  return d;
};

// short light gaps between the triangles, denser towards the outlet
const surfaceGaps = () => {
  let d = '';
  for (let i = 0; i < 5500; i++) {
    const u = Math.pow(noise(i, 1) + 0.5, 0.65);
    const v = (noise(i, 2) + 0.5) * 1.5 - 0.75;
    const x = START[0] + AXIS[0] * u + 60 + v * -40;
    const y = START[1] + AXIS[1] * u + 20 + v * 124;
    const len = 3 + (noise(i, 3) + 0.5) * 4;
    d += `M${x.toFixed(0)} ${y.toFixed(0)}l1 ${len.toFixed(0)}`;
  }
  return d;
};

const capMesh = (cx, cy, step) => {
  const n = Math.ceil(150 / step);
  const p = (i, j) => [
    cx + (i + (j % 2 ? 0.5 : 0) + noise(i, j) * 0.5) * step,
    cy + (j + noise(j + 40, i) * 0.5) * step,
  ];
  let d = '';
  for (let j = -n; j <= n; j++) {
    for (let i = -n; i <= n; i++) {
      const o = j % 2 ? 1 : 0;
      d += `M${fmt(p(i, j))}L${fmt(p(i + 1, j))}M${fmt(p(i, j))}L${fmt(p(i + o, j + 1))}M${fmt(p(i, j))}L${fmt(p(i + o - 1, j + 1))}`;
    }
  }
  return d;
};

const SURFACE = surfaceMesh();
const GAPS = surfaceGaps();
const CAP_LEFT = capMesh(1187, 718, 19);
const CAP_RIGHT = capMesh(2548, 1174, 13);
const OUTLET_EDGE = `M${fmt(rim(1, -1.5))}A${RX} ${RY} 15 1 1 ${fmt(rim(1, 1.9))}`;

const Cap = ({ x, y, ...rest }) => (
  <ellipse cx={x} cy={y} rx={RX} ry={RY} transform={`rotate(15 ${x} ${y})`} {...rest} />
);

const Model = () => (
  <svg className="absolute inset-0 w-full h-full" viewBox="653 294 2340 1091" preserveAspectRatio="xMidYMid slice" fontFamily="Open Sans, sans-serif">
    <defs>
      <linearGradient id="skin" gradientUnits="userSpaceOnUse" x1="1909" y1="824" x2="1827" y2="1068">
        <stop offset="0" stopColor="#3ffc34" />
        <stop offset=".14" stopColor="#4cf846" />
        <stop offset=".24" stopColor="#6aec74" />
        <stop offset=".6" stopColor="#7ce68a" />
        <stop offset=".82" stopColor="#60f064" />
        <stop offset="1" stopColor="#3ffc34" />
      </linearGradient>
      <clipPath id="clipLeft"><Cap x={1187} y={718} /></clipPath>
      <clipPath id="clipRight"><Cap x={2548} y={1174} /></clipPath>
    </defs>

    {/* pipe surface */}
    <g fill="url(#skin)">
      <path d="M1148 844 L1226 592 L2587 1048 L2509 1300 Z" />
      <Cap x={2548} y={1174} />
    </g>
    <path d={SURFACE} stroke="#44fb3c" strokeWidth="2" fill="none" opacity=".45" />
    <path d={GAPS} stroke="#cfe0e0" strokeWidth="2" fill="none" opacity=".42" />
    <path d="M1226 595 L2587 1051 M1147 841 L2508 1297" stroke="#44fb3a" strokeWidth="9" />

    {/* seams and partition rings */}
    <g fill="none" stroke="#5f9c8c" strokeWidth="3">
      <path d="M1290 643 L2621 1088" strokeDasharray="14 5" />
      <path d="M1205 860 L2540 1304" strokeDasharray="16 12" />
      <path d="M1277 793 L2443 1187 L2625 1243" stroke="#7a9f9c" strokeDasharray="20 3" />
      <path d="M1656 742 C1716 800 1720 946 1589 985" stroke="#64a08c" />
      <path d="M1544 750 C1480 800 1480 900 1509 942" strokeDasharray="16 14" />
      <path d="M2202 925 C2262 983 2266 1129 2135 1168" stroke="#74a09c" />
      <path d="M2090 933 C2026 983 2026 1083 2070 1145" strokeDasharray="16 14" />
    </g>

    {/* outlet */}
    <Cap x={2548} y={1174} fill="#b8e49a" />
    <g clipPath="url(#clipRight)">
      <path d={CAP_RIGHT} stroke="#66e054" strokeWidth="3" fill="none" transform="translate(5 6)" />
      <path d={CAP_RIGHT} stroke="#f2f6ea" strokeWidth="3" fill="none" strokeDasharray="4 17" opacity=".8" />
      <path d={CAP_RIGHT} stroke="#e0804c" strokeWidth="2" fill="none" strokeDasharray="12 5" opacity=".7" />
      <path d="M2471 1122 L2643 1120 M2457 1227 L2640 1226 M2512 1057 L2500 1240 M2595 1063 L2584 1285 M2443 1187 L2625 1243 M2500 1048 L2621 1088" stroke="#7d84a0" strokeWidth="3" strokeDasharray="22 5" />
    </g>
    <Cap x={2548} y={1174} fill="none" stroke="#b4722c" strokeWidth="3" strokeDasharray="26 6" />
    <path d={OUTLET_EDGE} fill="none" stroke="#e24a44" strokeWidth="5" />

    {/* inlet */}
    <Cap x={1187} y={718} fill="#93bfa8" />
    <g clipPath="url(#clipLeft)">
      <path d={CAP_LEFT} stroke="#7fce7c" strokeWidth="4" fill="none" transform="translate(8 8)" />
      <path d={CAP_LEFT} stroke="#e85468" strokeWidth="2" fill="none" />
      <path d={CAP_LEFT} stroke="#ec4a70" strokeWidth="5" fill="none" strokeDasharray="4 15" opacity=".5" />
      <path d="M1080 667 H1300 M1080 771 H1300 M1149 600 L1136 830 M1236 600 L1221 840" stroke="#7c68b8" strokeWidth="3" strokeDasharray="20 4" />
      <path d="M1083 721 L1270 783" stroke="#e8401c" strokeWidth="5" />
    </g>
    <Cap x={1187} y={718} fill="none" stroke="#e23a3c" strokeWidth="5" />

    <path d="M1294 718 L2651 1170" stroke="#cc6a24" strokeWidth="6" strokeDasharray="12 3" />
    <path d="M1275 788 L2443 1179" stroke="#bc8a34" strokeWidth="5" strokeDasharray="14 6" />

    {/* streamlines */}
    <g fill="none" stroke="#08f808" strokeWidth="11" strokeLinecap="round" strokeDasharray="0 24">
      <path d="M1435 506 L1442 528 L1454 547 L1470 563 L1488 576 L1528 596 L1588 622 L1648 654 L1682 682 L1714 714 L1742 750 L1758 770" />
      <path d="M1755 487 L1744 506 L1733 526 L1720 570 L1719 594 L1725 639 L1736 683 L1750 727 L1757 749 L1768 768" />
      <path d="M2201 619 L2186 636 L2168 648 L2127 667 L2064 688 L2021 698 L1976 700 L1933 699 L1888 703 L1847 719 L1810 743 L1792 757" />
    </g>

    {/* probe points */}
    <circle cx="1765" cy="782" r="13" fill="#fff" stroke="#f41c1c" strokeWidth="6" />
    <rect x="1752" y="763" width="26" height="9" fill="#14f414" />
    <g fill="#050505">
      <circle cx="1327" cy="776" r="6" />
      <circle cx="1732" cy="908" r="6" />
      <circle cx="1765" cy="782" r="5" />
      <circle cx="1792" cy="620" r="6" />
      <path d="M1354 781 L1543 843 L1547 829 L1582 863 L1533 873 L1537 856 L1349 791 Z" />
    </g>
    <g fill="#0c0c0c" fontSize="46" fontWeight="700">
      <text x="1325" y="827">A</text>
      <text x="1742" y="951">B</text>
      <text x="1766" y="833">C</text>
      <text x="1802" y="666">D</text>
    </g>
    <circle cx="2996" cy="830" r="10" fill="#f4f4ee" stroke="#555" strokeWidth="4" />

    {/* axis triad */}
    <path d="M2819 1220 L2826 1120" stroke="#12a428" strokeWidth="10" />
    <path d="M2826 1086 L2838 1126 Q2824 1130 2810 1126 Z" fill="#0aa81c" />
    <circle cx="2842" cy="1139" r="12" fill="#4fbfe8" />
    <path d="M2818 1222 L2775 1206" stroke="#06067c" strokeWidth="9" />
    <path d="M2745 1200 L2766 1190 L2779 1206 L2771 1219 L2758 1222 Z" fill="#0606a0" />
    <path d="M2818 1221 L2890 1219" stroke="#b01010" strokeWidth="9" />
    <path d="M2927 1219 L2891 1203 Q2886 1220 2892 1238 Z" fill="#dc0c0c" />
    <g fontFamily="Liberation Mono, monospace" fontSize="34" fontWeight="700">
      <text x="2828" y="1060" fill="#6edc9c">Y</text>
      <text x="2726" y="1196" fill="#6868c8">Z</text>
      <text x="2951" y="1218" fill="#e05c70">X</text>
    </g>
  </svg>
);

const Viewport = () => (
  <main className="flex-1 min-w-0 flex flex-col">
    <div className="relative flex-1 overflow-hidden mt-[6px] mr-[3px] bg-linear-to-b from-[#6287de] via-[#a7b8ec] via-45% to-white">
      <div className="absolute inset-0 bg-linear-to-b from-transparent from-45% via-[#cbd6f4] via-67% to-[#fdfdff] to-95%" />
      <Model />
      <div className="absolute right-9 top-6 flex items-baseline leading-[120px]">
        <span className="font-[Liberation_Sans] font-bold text-[108px] text-white">ΛN</span>
        <span className="font-[Liberation_Serif] text-[100px] text-[#fccb14]">SYS</span>
      </div>
    </div>
    <div className="h-[17px] bg-[#f1f1f1] border-b-2 border-[#bdbdbd]" />
    <div className="flex h-[46px] bg-[#f7f7fc] justify-between items-start">
      <div className="flex items-center h-[39px] w-[126px] gap-2 pl-1 bg-[#f6f9fd] border-2 border-t-0 border-b-4 border-[#7da6ce]">
        <PartIcon />
        <a href="#aaa" className="text-[22px] leading-7 text-[#4a86c0]">aaa*</a>
        <button aria-label="关闭标签"><Svg className="w-4 h-4"><path d="M3 3 L29 29 M29 3 L3 29" stroke="#666" strokeWidth="5" /></Svg></button>
      </div>
      <div className="flex items-center h-10 gap-4 pr-3">
        <button aria-label="上一个"><Svg className="w-[10px] h-4"><path d="M28 2 L6 16 L28 30 Z" stroke="#888" strokeWidth="5" /></Svg></button>
        <button aria-label="下一个"><Svg className="w-[10px] h-4"><path d="M4 2 L26 16 L4 30 Z" stroke="#888" strokeWidth="5" /></Svg></button>
        <button aria-label="关闭视图"><Svg className="w-4 h-4"><path d="M3 3 L29 29 M29 3 L3 29" stroke="#666" strokeWidth="5" /></Svg></button>
      </div>
    </div>
  </main>
);

/* ---------- status bar ---------- */

const Sep = () => <span className="w-[3px] h-12 bg-[#5784ad]" />;
const Tri = () => <Svg className="w-[14px] h-[10px]"><path d="M16 0 L32 32 H0 Z" fill="#e8eef4" /></Svg>;
const BL = '#5cb0f4';

const StatusBar = () => (
  <footer className="flex items-center h-[55px] bg-[#2b5c87] border-b-[3px] border-[#5a88b2] text-[#d5e1ec] text-[20px] whitespace-nowrap pt-[3px] pr-[38px]">
    <p className="flex-1 pl-[19px]">单击一个对象。双击以选择环边。三连击以选择实体。</p>
    <Sep />
    <span className="w-[232px]" />
    <Sep />
    <button aria-label="消息" className="flex items-center gap-[10px] w-[70px] pl-[12px]">
      <Svg className="w-[26px] h-[21px]"><path d="M16 0 L32 32 H0 Z" fill="#9fb4c8" /></Svg>
      <Svg className="w-3 h-2"><path d="M16 0 L32 32 H0 Z" fill="#b4cadf" /></Svg>
    </button>
    <Sep />
    <span className="w-[231px]" />
    <Sep />
    <span className="w-[363px] pl-[147px]">1 组件</span>
    <div className="flex items-center">
      <button aria-label="列表"><Svg className="w-4 h-7"><path d="M16 1 L30 11 H2 Z M2 21 H30 L16 31 Z" fill="#8798a8" /></Svg></button>
      <button aria-label="选择历史" className="ml-4"><Svg className="w-8 h-7"><path d="M1 4 L16 20 L10 20 L14 29 L10 30 L6 22 L1 26 Z" fill="#fff" /><path d="M16 8 C24 0 34 10 28 18 L22 26" stroke={BL} strokeWidth="5" /></Svg></button>
      <button aria-label="选择方式" className="flex items-center ml-[18px] gap-4"><Svg className="w-5 h-7"><path d="M3 2 L30 19 L20 20 L28 29 L20 31 L13 22 L3 27 Z" fill="#fff" /></Svg><Tri /></button>
      <button aria-label="框选" className="flex items-center ml-[15px] gap-2"><Svg className="w-8 h-[26px]"><path d="M2 2 H30 V30 H2 Z" stroke={BL} strokeWidth="4" strokeDasharray="6 4" /></Svg><Tri /></button>
      <span className="w-[2px] h-12 bg-[#5784ad] mx-2" />
      <button aria-label="旋转" className="flex items-center gap-[7px]"><Svg className="w-8 h-[26px]"><path d="M17 3 C10 10 24 20 16 30" stroke={BL} strokeWidth="4" /><path d="M3 17 C10 8 22 22 29 14" stroke={BL} strokeWidth="4" /><path d="M10 9 L18 0 L24 9 Z M24 6 L32 14 L25 22 Z M7 9 L0 18 L8 24 Z M10 24 L22 25 L14 32 Z" fill={BL} /></Svg><Tri /></button>
      <button aria-label="平移" className="ml-4"><Svg className="w-[30px] h-[26px]"><path d="M16 3 V29 M3 16 H29" stroke={BL} strokeWidth="4" /><path d="M10 8 L16 0 L22 8 Z M10 24 H22 L16 32 Z M8 10 L0 16 L8 22 Z M24 10 L32 16 L24 22 Z" fill={BL} /></Svg></button>
      <button aria-label="缩放" className="flex items-center ml-4 gap-2"><Svg className="w-7 h-7"><path d="M18 20 L29 30" stroke={BL} strokeWidth="6" /><circle cx="13" cy="12" r="12" fill="#fff" /></Svg><Tri /></button>
      <button aria-label="上一视图" className="ml-4"><Svg className="w-[30px] h-6"><path d="M31 2 L14 18" stroke={BL} strokeWidth="9" /><path d="M1 31 L4 10 L24 26 Z" fill={BL} /></Svg></button>
      <button aria-label="下一视图" className="ml-4"><Svg className="w-[30px] h-6"><path d="M2 28 L18 12" stroke="#8090a0" strokeWidth="7" /><path d="M31 3 L12 6 L26 22 Z" fill="#8090a0" /></Svg></button>
    </div>
  </footer>
);

export default function App() {
  return (
    <div className="h-screen flex flex-col bg-white pt-[27px] pb-[30px] pl-5 pr-[29px] font-['Open_Sans','Noto_Sans_CJK_SC',sans-serif]">
      <TitleBar />
      <Ribbon />
      <div className="flex flex-1 min-h-0 bg-white">
        <Sidebar />
        <Viewport />
      </div>
      <StatusBar />
    </div>
  );
}
